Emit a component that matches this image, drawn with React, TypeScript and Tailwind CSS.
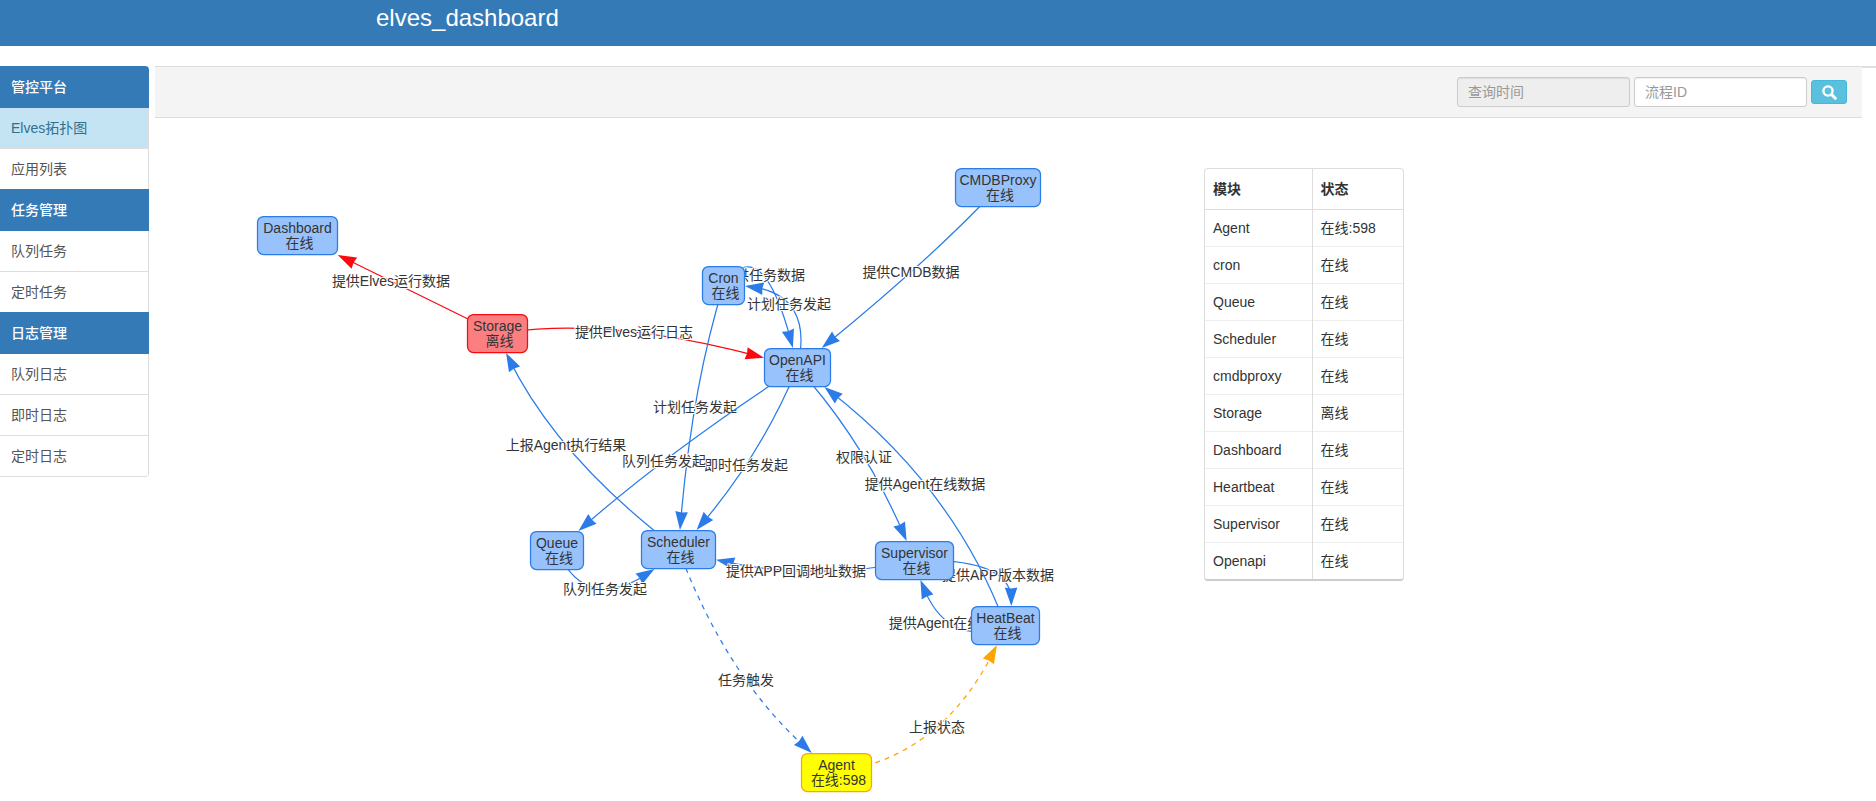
import React from "react";

type Palette = "blue" | "red" | "yellow";
type Box = { name: string; status: string; x: number; y: number; w: number; tone: Palette };
type Edge = { from: string; to: string; label: string; lx: number; ly: number; color: string; dashed?: boolean };
type Point = { x: number; y: number };

const NODE_HEIGHT = 39;
const BLUE = "#2b7ce9";
const RED = "#fa0a10";
const ORANGE = "#ffa500";

const FILL: Record<Palette, string> = { blue: "#97c2fc", red: "#fb7e81", yellow: "#ffff00" };
const STROKE: Record<Palette, string> = { blue: BLUE, red: RED, yellow: ORANGE };

const NODES: Record<string, Box> = {
  dashboard: { name: "Dashboard", status: "在线", x: 257, y: 216, w: 81, tone: "blue" },
  storage: { name: "Storage", status: "离线", x: 467, y: 314, w: 61, tone: "red" },
  cron: { name: "Cron", status: "在线", x: 702, y: 266, w: 43, tone: "blue" },
  openapi: { name: "OpenAPI", status: "在线", x: 764, y: 348, w: 67, tone: "blue" },
  cmdb: { name: "CMDBProxy", status: "在线", x: 955, y: 168, w: 86, tone: "blue" },
  queue: { name: "Queue", status: "在线", x: 530, y: 531, w: 54, tone: "blue" },
  scheduler: { name: "Scheduler", status: "在线", x: 641, y: 530, w: 75, tone: "blue" },
  supervisor: { name: "Supervisor", status: "在线", x: 875, y: 541, w: 79, tone: "blue" },
  heartbeat: { name: "HeatBeat", status: "在线", x: 971, y: 606, w: 69, tone: "blue" },
  agent: { name: "Agent", status: "在线:598", x: 801, y: 753, w: 71, tone: "yellow" },
};

const EDGES: Edge[] = [
  { from: "storage", to: "dashboard", label: "提供Elves运行数据", lx: 391, ly: 281, color: RED },
  { from: "storage", to: "openapi", label: "提供Elves运行日志", lx: 634, ly: 332, color: RED },
  { from: "cmdb", to: "openapi", label: "提供CMDB数据", lx: 911, ly: 272, color: BLUE },
  { from: "cron", to: "openapi", label: "提供任务数据", lx: 763, ly: 275, color: BLUE },
  { from: "openapi", to: "cron", label: "计划任务发起", lx: 789, ly: 304, color: BLUE },
  { from: "cron", to: "scheduler", label: "计划任务发起", lx: 695, ly: 407, color: BLUE },
  { from: "openapi", to: "scheduler", label: "即时任务发起", lx: 746, ly: 465, color: BLUE },
  { from: "openapi", to: "queue", label: "队列任务发起", lx: 664, ly: 461, color: BLUE },
  { from: "scheduler", to: "storage", label: "上报Agent执行结果", lx: 566, ly: 445, color: BLUE },
  { from: "queue", to: "scheduler", label: "队列任务发起", lx: 605, ly: 589, color: BLUE },
  { from: "supervisor", to: "scheduler", label: "提供APP回调地址数据", lx: 796, ly: 571, color: BLUE },
  { from: "openapi", to: "supervisor", label: "权限认证", lx: 864, ly: 457, color: BLUE },
  { from: "supervisor", to: "heartbeat", label: "提供APP版本数据", lx: 998, ly: 575, color: BLUE },
  { from: "heartbeat", to: "openapi", label: "提供Agent在线数据", lx: 925, ly: 484, color: BLUE },
  { from: "heartbeat", to: "supervisor", label: "提供Agent在线数据", lx: 949, ly: 623, color: BLUE },
  { from: "scheduler", to: "agent", label: "任务触发", lx: 746, ly: 680, color: BLUE, dashed: true },
  { from: "agent", to: "heartbeat", label: "上报状态", lx: 937, ly: 727, color: ORANGE, dashed: true },
];

const center = (n: Box): Point => ({ x: n.x + n.w / 2, y: n.y + NODE_HEIGHT / 2 });

const pointAt = (a: Point, c: Point, b: Point, t: number): Point => ({
  x: (1 - t) * (1 - t) * a.x + 2 * t * (1 - t) * c.x + t * t * b.x,
  y: (1 - t) * (1 - t) * a.y + 2 * t * (1 - t) * c.y + t * t * b.y,
});

// The curve passes through its label at t = 0.5 and stops at the border of the target box.
function route(edge: Edge) {
  const target = NODES[edge.to];
  const a = center(NODES[edge.from]);
  const b = center(target);
  const c = { x: 2 * edge.lx - (a.x + b.x) / 2, y: 2 * edge.ly - (a.y + b.y) / 2 };
  let low = 0.5;
  let high = 1;
  for (let i = 0; i < 20; i++) {
    const mid = (low + high) / 2;
    const p = pointAt(a, c, b, mid);
    const inside = Math.abs(p.x - b.x) < target.w / 2 && Math.abs(p.y - b.y) < NODE_HEIGHT / 2;
    if (inside) high = mid;
    else low = mid;
  }
  const tip = pointAt(a, c, b, low);
  const guide = pointAt(a, c, b, low - 0.1);
  const angle = Math.atan2(tip.y - guide.y, tip.x - guide.x);
  const end = low - 0.02;
  const stop = pointAt(a, c, b, end);
  const ctrl = { x: a.x + (c.x - a.x) * end, y: a.y + (c.y - a.y) * end };
  return {
    line: `M${a.x} ${a.y}Q${ctrl.x} ${ctrl.y} ${stop.x} ${stop.y}`,
    head: `translate(${tip.x} ${tip.y}) rotate(${(angle * 180) / Math.PI})`,
  };
}

function Topology() {
  return (
    <svg
      width="1049"
      height="680"
      viewBox="155 118 1049 680"
      role="img"
      aria-label="Elves拓扑图"
      className="block shrink-0 text-[14px]"
      fill="#343434"
      textAnchor="middle"
    >
      {EDGES.map((edge) => {
        const { line, head } = route(edge);
        return (
          <g key={`${edge.from}-${edge.to}`}>
            <path
              d={line}
              fill="none"
              stroke={edge.color}
              strokeWidth="1.25"
              strokeDasharray={edge.dashed ? "5 5" : undefined}
            />
            <path d="M0 0L-18.5 6.3L-17.5 0L-18.5 -6.3Z" transform={head} fill={edge.color} />
            <text x={edge.lx} y={edge.ly + 5} stroke="#ffffff" strokeWidth="2" strokeLinejoin="round" paintOrder="stroke">
              {edge.label}
            </text>
          </g>
        );
      })}
      {Object.values(NODES).map((node) => (
        <g key={node.name}>
          <rect
            x={node.x + 0.5}
            y={node.y + 0.5}
            width={node.w - 1}
            height={NODE_HEIGHT - 1}
            rx="6"
            fill={FILL[node.tone]}
            stroke={STROKE[node.tone]}
            strokeWidth="1.25"
          />
          <text x={node.x + node.w / 2} y={node.y + 17}>{node.name}</text>
          <text x={node.x + node.w / 2 + 2} y={node.y + 32}>{node.status}</text>
        </g>
      ))}
    </svg>
  );
}

const MENU = [
  { title: "管控平台", items: ["Elves拓扑图", "应用列表"] },
  { title: "任务管理", items: ["队列任务", "定时任务"] },
  { title: "日志管理", items: ["队列日志", "即时日志", "定时日志"] },
];

function Sidebar() {
  return (
    <nav className="w-[149px] shrink-0 self-start overflow-hidden rounded-r border-b border-[#ddd]">
      {MENU.map((group) => (
        <section key={group.title}>
          <h2 className="flex h-[42px] items-center bg-[#337ab7] pl-[11px] font-medium text-white">{group.title}</h2>
          <ul className="divide-y divide-[#ddd] border-r border-[#ddd]">
            {group.items.map((item) => (
              <li key={item}>
                <a
                  href="#"
                  className={
                    item === "Elves拓扑图"
                      ? "flex h-10 items-center bg-[#c4e3f3] pl-[11px] text-[#31708f]"
                      : "flex h-10 items-center pl-[11px] text-[#555]"
                  }
                >
                  {item}
                </a>
              </li>
            ))}
          </ul>
        </section>
      ))}
    </nav>
  );
}

function Toolbar() {
  return (
    <form className="mr-[14px] flex h-[51px] items-center justify-end gap-1 border-b border-[#ddd] bg-[#f4f4f4] pr-[15px]">
      <input
        aria-label="查询时间"
        placeholder="查询时间"
        readOnly
        className="h-[30px] w-[173px] rounded-[3px] border border-[#ccc] bg-[#eee] px-[10px] shadow-[inset_0_1px_1px_rgba(0,0,0,0.075)] placeholder:text-[#999]"
      />
      <input
        aria-label="流程ID"
        placeholder="流程ID"
        className="h-[30px] w-[173px] rounded-[3px] border border-[#ccc] bg-white px-[10px] shadow-[inset_0_1px_1px_rgba(0,0,0,0.075)] placeholder:text-[#999]"
      />
      <button
        type="button"
        aria-label="查询"
        className="flex h-6 w-9 items-center justify-center rounded-[3px] border border-[#46b8da] bg-[#5bc0de]"
      >
        <svg width="15" height="15" viewBox="0 0 15 15" fill="none" stroke="#fff">
          <circle cx="6" cy="6" r="4.6" strokeWidth="2.4" />
          <path d="M9.6 9.6L13.3 13.3" strokeWidth="3" strokeLinecap="round" />
        </svg>
      </button>
    </form>
  );
}

const MODULES = [
  ["Agent", "在线:598"],
  ["cron", "在线"],
  ["Queue", "在线"],
  ["Scheduler", "在线"],
  ["cmdbproxy", "在线"],
  ["Storage", "离线"],
  ["Dashboard", "在线"],
  ["Heartbeat", "在线"],
  ["Supervisor", "在线"],
  ["Openapi", "在线"],
];

function StatusTable() {
  return (
    <div className="mt-[50px] w-[200px] shrink-0 self-start overflow-hidden rounded border border-b-2 border-[#ddd] border-b-[#ccc]">
      <table className="w-full table-fixed border-collapse text-left text-[#333]">
        <thead>
          <tr className="h-10 border-b border-[#ddd]">
            <th className="w-[107px] border-r border-[#ddd] pl-2">模块</th>
            <th className="pl-2">状态</th>
          </tr>
        </thead>
        <tbody>
          {MODULES.map(([name, status]) => (
            <tr key={name} className="h-[37px] border-b border-[#eee] last:border-b-0">
              <td className="border-r border-[#ddd] pl-2">{name}</td>
              <td className="pl-2">{status}</td>
            </tr>
          ))}
        </tbody>
      </table>
    </div>
  );
}

export default function App() {
  return (
    <div className="bg-white font-['Liberation_Sans','Noto_Sans_CJK_SC',sans-serif] text-[14px] leading-5">
      <header className="h-[46px] bg-[#337ab7] pl-[376px]">
        <h1 className="text-2xl leading-9 text-white">elves_dashboard</h1>
      </header>
      <div className="mt-5 flex">
        <Sidebar />
        <main className="ml-[6px] min-w-0 flex-1 border-t border-[#ddd] shadow-[inset_0_1px_0_#e0e0e0]">
          <Toolbar />
          <div className="flex overflow-hidden">
            <Topology />
            <StatusTable />
          </div>
        </main>
      </div>
    </div>
  );
}
